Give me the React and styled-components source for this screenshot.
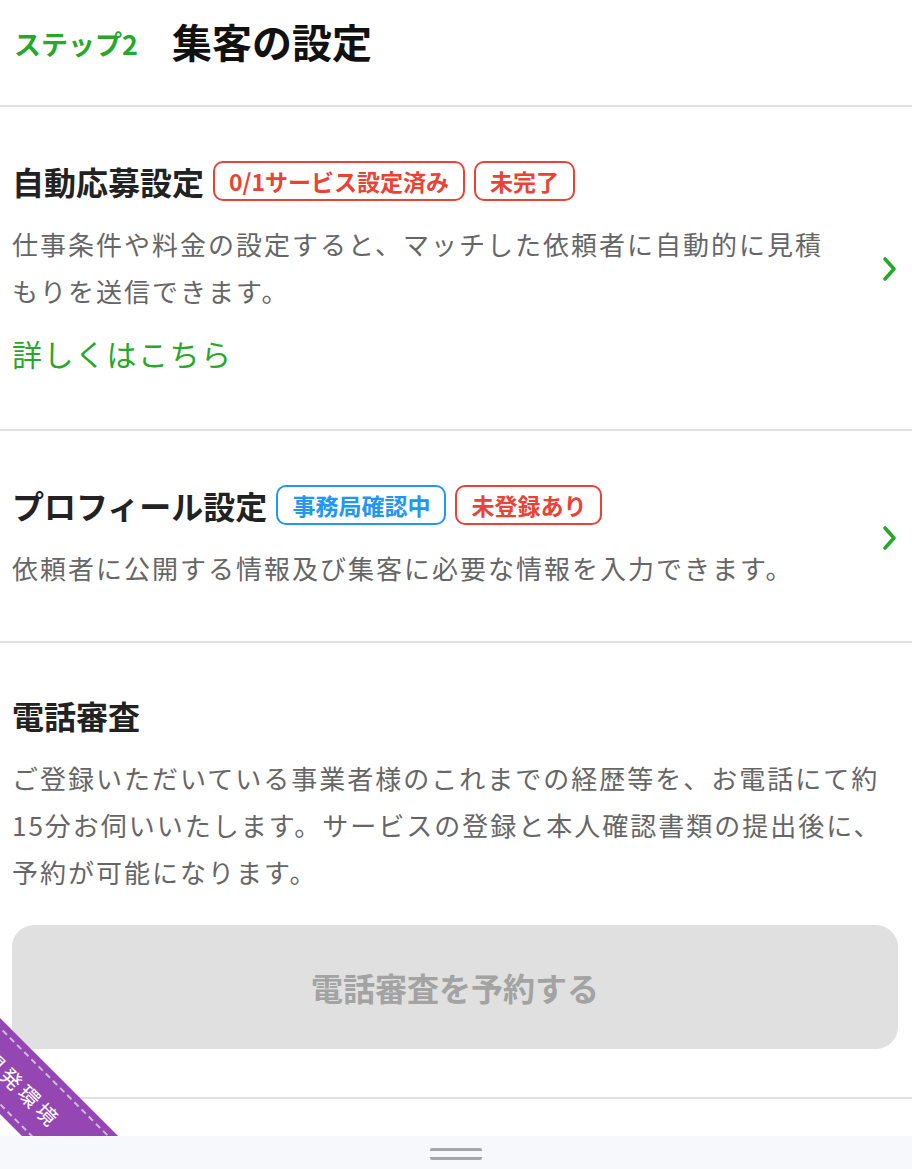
import styled, { createGlobalStyle } from 'styled-components';

const GlobalStyle = createGlobalStyle`
  html, body {
    margin: 0;
    padding: 0;
    background: #fff;
  }
  body {
    font-family: "Noto Sans CJK JP", "Noto Sans", sans-serif;
    color: #222;
  }
  * {
    box-sizing: border-box;
  }
`;

function Chevron() {
  return (
    <svg width='16' height='26' viewBox='0 0 16 26' fill='none'>
      <polyline
        points='3,3 12,13 3,23'
        stroke='#27a82a'
        strokeWidth='3.6'
        strokeLinecap='round'
        strokeLinejoin='round'
      />
    </svg>
  );
}

export default function App() {
  return (
    <>
      <GlobalStyle />
      <Page>
        <Header>
          <Step>ステップ2</Step>
          <PageTitle>集客の設定</PageTitle>
        </Header>

        <LinkSection $bottom={53}>
          <Body>
            <TitleRow>
              <SectionTitle>自動応募設定</SectionTitle>
              <Badge $color='#ea4335'>0/1サービス設定済み</Badge>
              <Badge $color='#ea4335'>未完了</Badge>
            </TitleRow>
            <Description>
              仕事条件や料金の設定すると、マッチした依頼者に自動的に見積もりを送信できます。
            </Description>
            <MoreLink href='#'>詳しくはこちら</MoreLink>
          </Body>
          <Chevron />
        </LinkSection>

        <LinkSection $bottom={50}>
          <Body>
            <TitleRow>
              <SectionTitle>プロフィール設定</SectionTitle>
              <Badge $color='#2196f3'>事務局確認中</Badge>
              <Badge $color='#ea4335'>未登録あり</Badge>
            </TitleRow>
            <Description>
              依頼者に公開する情報及び集客に必要な情報を入力できます。
            </Description>
          </Body>
          <Chevron />
        </LinkSection>

        <Section>
          <SectionTitle>電話審査</SectionTitle>
          <Description>
            ご登録いただいている事業者様のこれまでの経歴等を、お電話にて約15分お伺いいたします。サービスの登録と本人確認書類の提出後に、予約が可能になります。
          </Description>
          <ReserveButton disabled>電話審査を予約する</ReserveButton>
        </Section>

        <Spacer />

        <RibbonCorner>
          <Ribbon>開発環境</Ribbon>
        </RibbonCorner>
      </Page>

      <BottomBar>
        <Handle />
      </BottomBar>
    </>
  );
}

const Page = styled.main`
  position: relative;
  width: 912px;
  overflow: hidden;
`;

const Header = styled.header`
  display: flex;
  align-items: center;
  gap: 34px;
  height: 107px;
  padding: 0 14px 24px;
  border-bottom: 2px solid #e0e0e0;
`;

const Step = styled.span`
  color: #27a82a;
  font-size: 27px;
  font-weight: 700;
  line-height: 1;
  margin-top: 6px;
`;

const PageTitle = styled.h1`
  margin: 0;
  font-size: 40px;
  font-weight: 700;
  line-height: 1;
  color: #111;
`;

const LinkSection = styled.section`
  display: flex;
  align-items: center;
  gap: 40px;
  padding: 54px 14px ${(p) => p.$bottom}px 12px;
  border-bottom: 2px solid #e0e0e0;
  cursor: pointer;
`;

const Section = styled.section`
  padding: 52px 14px 48px 12px;
  border-bottom: 2px solid #e0e0e0;
`;

const Body = styled.div`
  flex: 1;
  min-width: 0;
`;

const TitleRow = styled.div`
  display: flex;
  align-items: center;
  gap: 9px;
`;

const SectionTitle = styled.h2`
  margin: 0;
  font-size: 32px;
  font-weight: 700;
  line-height: 40px;
  color: #222;
`;

const Badge = styled.span`
  display: inline-flex;
  align-items: center;
  height: 40px;
  padding: 0 14px;
  border: 2px solid ${(p) => p.$color};
  border-radius: 10px;
  color: ${(p) => p.$color};
  font-size: 23px;
  font-weight: 700;
  line-height: 1;
`;

const Description = styled.p`
  margin: 19px 0 0;
  font-size: 26px;
  line-height: 47px;
  letter-spacing: 2px;
  color: #666;
`;

const MoreLink = styled.a`
  display: block;
  margin-top: 17px;
  font-size: 30px;
  line-height: 45px;
  letter-spacing: 1.5px;
  color: #27a82a;
  text-decoration: none;
`;

const ReserveButton = styled.button`
  display: block;
  width: 100%;
  height: 124px;
  margin-top: 30px;
  border: none;
  border-radius: 22px;
  background: #e0e0e0;
  color: #a3a3a3;
  font-family: "Noto Sans CJK JP", sans-serif;
  font-size: 32px;
  font-weight: 700;
`;

const Spacer = styled.div`
  height: 37px;
`;

const RibbonCorner = styled.div`
  position: absolute;
  left: 0;
  bottom: 0;
  width: 130px;
  height: 130px;
  overflow: hidden;
  pointer-events: none;
`;

const Ribbon = styled.div`
  position: absolute;
  left: -132px;
  top: 44px;
  width: 300px;
  height: 68px;
  padding-left: 12px;
  transform: rotate(45deg);
  background: #9446b2;
  color: #fff;
  font-size: 21px;
  letter-spacing: 4px;
  display: flex;
  align-items: center;
  justify-content: center;

  &::before {
    content: '';
    position: absolute;
    left: 0;
    right: 0;
    top: 6px;
    bottom: 6px;
    border-top: 2px dashed rgba(255, 255, 255, 0.6);
    border-bottom: 2px dashed rgba(255, 255, 255, 0.6);
  }
`;

const BottomBar = styled.div`
  display: flex;
  justify-content: center;
  align-items: center;
  height: 33px;
  background: #f7f8fc;
`;

const Handle = styled.div`
  width: 52px;
  height: 12px;
  border-top: 3px solid #a6a6a6;
  border-bottom: 3px solid #a6a6a6;
  border-radius: 2px;
  margin-top: 2px;
`;
